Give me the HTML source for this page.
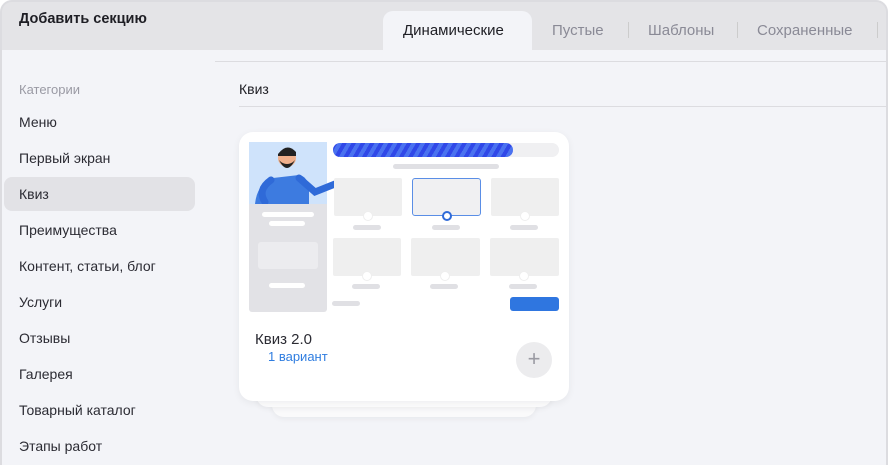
<!DOCTYPE html><html><head><meta charset="utf-8"><style>
*{margin:0;padding:0;box-sizing:border-box}
body{width:888px;height:465px;overflow:hidden;background:#fff;font-family:"Liberation Sans",sans-serif}
.w{position:absolute;left:0;top:0;width:888px;height:465px;background:#f3f4f8;border-radius:12px 12px 0 0;overflow:hidden}
.fr{position:absolute;left:0;top:0;width:888px;height:470px;border:2px solid #dcdce0;border-radius:12px 12px 0 0;pointer-events:none}
.hd{position:absolute;left:0;top:0;width:888px;height:50px;background:#e4e4e7}
.t{position:absolute;font-size:15px;color:#1e1e24}
.tab{position:absolute;top:22px;font-size:15px;color:#8a8a96}
.sep{position:absolute;top:22px;width:1px;height:16px;background:#ccc}
.si{position:absolute;left:19px;font-size:14px;color:#2b2b33}
.g{position:absolute;background:#efefef;border-radius:2px}
.bar{position:absolute;background:#e0e0e4;border-radius:3px;height:5px}
.dot{position:absolute;width:10px;height:10px;border-radius:50%;background:#fff;border:1px solid #eee}
</style></head><body><div class="w">
<div class="hd"></div>
<div class="t" style="left:19px;top:11px;font-weight:bold;font-size:14.5px">Добавить секцию</div>
<div style="position:absolute;left:383px;top:11px;width:149px;height:41px;background:#f3f4f8;border-radius:10px 10px 0 0"></div>
<div class="tab" style="left:403px;color:#1e1e24">Динамические</div>
<div class="tab" style="left:552px">Пустые</div><div class="sep" style="left:628px"></div>
<div class="tab" style="left:648px">Шаблоны</div><div class="sep" style="left:737px"></div>
<div class="tab" style="left:757px">Сохраненные</div><div class="sep" style="left:877px"></div>
<div style="position:absolute;left:215px;top:61px;width:680px;height:1px;background:#dcdce0"></div>
<div class="t" style="left:239px;top:81px;font-size:14px">Квиз</div>
<div style="position:absolute;left:239px;top:106px;width:660px;height:1px;background:#dcdce0"></div>
<div class="si" style="top:82px;font-size:13px;color:#9a9aa4">Категории</div>
<div style="position:absolute;left:4px;top:177px;width:191px;height:34px;background:#e2e2e6;border-radius:8px"></div>
<div class="si" style="top:114px">Меню</div>
<div class="si" style="top:150px">Первый экран</div>
<div class="si" style="top:186px">Квиз</div>
<div class="si" style="top:222px">Преимущества</div>
<div class="si" style="top:258px">Контент, статьи, блог</div>
<div class="si" style="top:294px">Услуги</div>
<div class="si" style="top:330px">Отзывы</div>
<div class="si" style="top:366px">Галерея</div>
<div class="si" style="top:402px">Товарный каталог</div>
<div class="si" style="top:438px">Этапы работ</div>
<div style="position:absolute;left:272px;top:381px;width:264px;height:36px;background:#fafafb;border-radius:12px;box-shadow:0 2px 6px rgba(0,0,0,.05)"></div>
<div style="position:absolute;left:256px;top:371px;width:296px;height:36px;background:#fcfcfd;border-radius:12px;box-shadow:0 2px 6px rgba(0,0,0,.05)"></div>
<div style="position:absolute;left:239px;top:132px;width:330px;height:269px;background:#fff;border-radius:14px;box-shadow:0 2px 8px rgba(0,0,0,.06)">
 <div style="position:absolute;left:10px;top:10px;width:78px;height:62px;background:#cfe3fb"></div>
 <svg style="position:absolute;left:10px;top:12px" width="100" height="62">
  <path d="M6 60 Q8 40 24 34 L50 31 Q58 32 60 44 L60 60Z" fill="#3d7be0"/>
  <path d="M50 34 L66 48 L86 40" stroke="#2f6ad8" stroke-width="7" fill="none" stroke-linecap="round"/>
  <path d="M22 36 Q8 46 16 58" stroke="#2f6ad8" stroke-width="7" fill="none" stroke-linecap="round"/>
  <circle cx="38" cy="14" r="9" fill="#f0b08c"/>
  <path d="M29 10 Q38 -2 47 8 L47 12 L29 12Z" fill="#222"/>
  <path d="M30 16 Q38 32 46 16 L44 18 Q38 22 32 18Z" fill="#222"/>
  <path d="M86 38 L94 36" stroke="#f0b08c" stroke-width="3"/>
 </svg>
 <div style="position:absolute;left:10px;top:72px;width:78px;height:108px;background:#e2e2e6;border-radius:0 0 3px 3px"></div>
 <div style="position:absolute;left:23px;top:80px;width:52px;height:5px;background:#fff;border-radius:3px"></div>
 <div style="position:absolute;left:30px;top:89px;width:36px;height:5px;background:#fff;border-radius:3px"></div>
 <div style="position:absolute;left:19px;top:110px;width:60px;height:27px;background:#ececef;border-radius:3px"></div>
 <div style="position:absolute;left:30px;top:151px;width:36px;height:5px;background:#fff;border-radius:3px"></div>
 <div style="position:absolute;left:94px;top:11px;width:226px;height:14px;background:#f0f0f2;border-radius:7px"></div>
 <div style="position:absolute;left:94px;top:11px;width:180px;height:14px;border-radius:7px;background:repeating-linear-gradient(120deg,#3048e8 0 4px,#4a72f0 4px 8px)"></div>
 <div class="bar" style="left:154px;top:32px;width:106px"></div>
 <div class="g" style="left:95px;top:46px;width:68px;height:38px"></div>
 <div style="position:absolute;left:173px;top:46px;width:69px;height:38px;background:#f0f0f2;border:1.5px solid #5a8ee6;border-radius:3px"></div>
 <div class="g" style="left:252px;top:46px;width:68px;height:38px"></div>
 <div class="dot" style="left:124px;top:79px"></div>
 <div style="position:absolute;left:203px;top:79px;width:10px;height:10px;border-radius:50%;background:#fff;border:2.5px solid #2f6ad8"></div>
 <div class="dot" style="left:281px;top:79px"></div>
 <div class="bar" style="left:114px;top:93px;width:28px"></div><div class="bar" style="left:193px;top:93px;width:28px"></div><div class="bar" style="left:271px;top:93px;width:28px"></div>
 <div class="g" style="left:94px;top:106px;width:68px;height:38px"></div>
 <div class="g" style="left:172px;top:106px;width:69px;height:38px"></div>
 <div class="g" style="left:251px;top:106px;width:69px;height:38px"></div>
 <div class="dot" style="left:123px;top:139px"></div><div class="dot" style="left:201px;top:139px"></div><div class="dot" style="left:280px;top:139px"></div>
 <div class="bar" style="left:113px;top:152px;width:28px"></div><div class="bar" style="left:191px;top:152px;width:28px"></div><div class="bar" style="left:270px;top:152px;width:28px"></div>
 <div class="bar" style="left:93px;top:169px;width:28px"></div>
 <div style="position:absolute;left:271px;top:165px;width:49px;height:14px;background:#2f76e0;border-radius:3px"></div>
 <div style="position:absolute;left:16px;top:199px;font-size:15px;color:#2b2b33">Квиз 2.0</div>
 <div style="position:absolute;left:29px;top:217px;font-size:13px;color:#2f7de0">1 вариант</div>
 <div style="position:absolute;left:277px;top:210px;width:36px;height:36px;border-radius:50%;background:#ececee;color:#9a9aa2;font-size:22px;line-height:34px;text-align:center">+</div>
</div>
<div class="fr"></div>
</div></body></html>
